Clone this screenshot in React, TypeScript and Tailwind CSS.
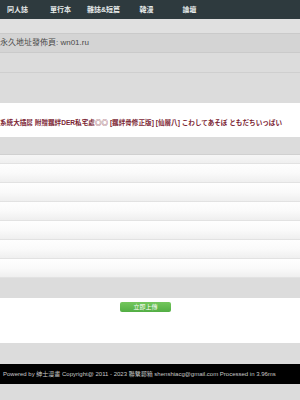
import React from 'react';

const cjk = "font-['Liberation_Sans','Noto_Sans_CJK_TC',sans-serif]";

const navItems = ['同人誌', '單行本', '雜誌&短篇', '韓漫', '論壇'];

export default function App() {
  return (
    <div className={`w-[300px] h-[400px] overflow-hidden bg-[#dcdcdc] ${cjk}`}>
      {/* top nav */}
      <div className="h-[19px] bg-[#2e3a3e] flex items-center -ml-[4px]">
        {navItems.map((n) => (
          <span key={n} className="w-[43px] shrink-0 text-center text-[7px] font-bold text-[#e8ecec] leading-none">
            {n}
          </span>
        ))}
      </div>

      <div className="h-[14px] bg-[#e0e0e0]" />

      {/* address band */}
      <div className="h-[20px] bg-[#d4d4d4] border-y border-[#cacaca] flex items-center">
        <span className="text-[8px] text-[#4a4a4a] leading-none whitespace-nowrap">永久地址發佈頁: wn01.ru</span>
      </div>

      <div className="h-[20px] bg-[#dcdcdc] border-b border-[#cfcfcf]" />
      <div className="h-[30px] bg-[#dcdcdc]" />

      {/* title row */}
      <div className="h-[34px] bg-white flex items-end pb-[10px]">
        <span className="text-[6.6px] font-bold text-[#7b2533] leading-none whitespace-nowrap">
          系統大插屌 附贈羈絆DER私宅處◎◎ [羈絆骨修正版] [仙層八] こわしてあそぼ ともだちいっぱい
        </span>
      </div>

      <div className="h-[18px] bg-[#dcdcdc] border-b border-[#d0d0d0]" />

      {/* list rows */}
      <div className="h-[9px] bg-gradient-to-b from-[#f6f6f6] to-[#efefef] border-b border-[#e2e2e2]" />
      {[0, 1, 2, 3, 4, 5].map((i) => (
        <div
          key={i}
          className="h-[19px] bg-gradient-to-b from-[#fefefe] via-[#fafafa] to-[#efefef] border-b border-[#e2e2e2]"
        />
      ))}

      <div className="h-[20px] bg-[#dcdcdc]" />

      {/* upload button area */}
      <div className="h-[45px] bg-white pt-[4px] flex justify-center">
        <div className="ml-[-9px] w-[51px] h-[10px] rounded-[2px] bg-gradient-to-b from-[#74c75d] to-[#52ae44] flex items-center justify-center">
          <span className="text-[6px] text-white leading-none">立即上傳</span>
        </div>
      </div>

      <div className="h-[21px] bg-[#dcdcdc]" />

      {/* footer */}
      <div className="h-[20px] bg-black flex items-center pl-[3px]">
        <span className="text-[6px] text-[#c8c8c8] leading-none whitespace-nowrap">
          Powered by 紳士漫畫 Copyright@ 2011 - 2023 聯繫郵箱 shenshiacg@gmail.com Processed in 3.96ms
        </span>
      </div>

      <div className="h-[17px] bg-[#dcdcdc]" />
    </div>
  );
}
